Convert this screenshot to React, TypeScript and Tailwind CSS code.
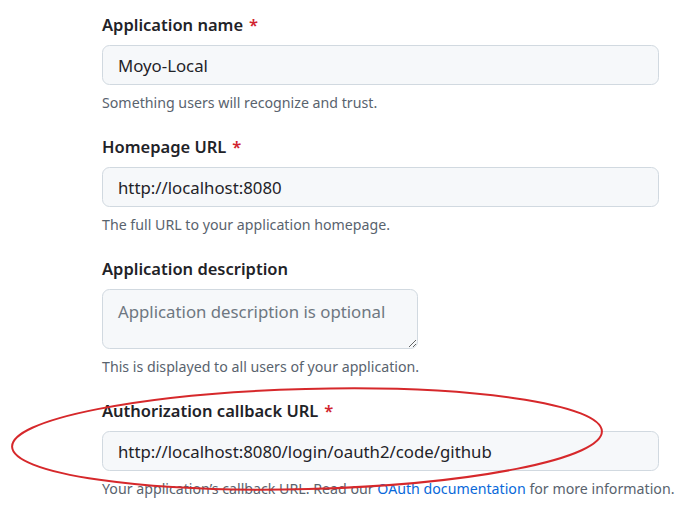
import type { ReactNode } from "react"

const font = { fontFamily: '"Segoe UI", "Noto Sans", "Liberation Sans", sans-serif' }

function Field({
  label,
  required,
  hint,
  children,
}: {
  label: string
  required?: boolean
  hint: ReactNode
  children: ReactNode
}) {
  return (
    <div className="flex flex-col">
      <label className="h-[26px] text-[16.5px] leading-[26px] font-semibold text-[#1f2328]">
        {label}
        {required && <span className="ml-[6px] text-[#d1242f]">*</span>}
      </label>
      <div className="mt-[7.5px]">{children}</div>
      <p className="mt-[7px] h-[22px] whitespace-nowrap text-[14.2px] leading-[22px] text-[#59636e]">{hint}</p>
    </div>
  )
}

function TextInput({ value }: { value: string }) {
  return (
    <input
      readOnly
      value={value}
      className="h-[40px] w-[557px] rounded-[7.5px] border border-[#d1d9e0] bg-[#f6f8fa] px-[15px] text-[16.8px] text-[#1f2328] outline-none"
      style={font}
    />
  )
}

export default function App() {
  return (
    <div className="relative h-[513px] w-[692px] overflow-hidden bg-white" style={font}>
      <div className="flex flex-col gap-[19.5px] pl-[102px] pt-[11.5px]">
        <Field label="Application name" required hint="Something users will recognize and trust.">
          <TextInput value="Moyo-Local" />
        </Field>
        <Field label="Homepage URL" required hint="The full URL to your application homepage.">
          <TextInput value="http://localhost:8080" />
        </Field>
        <Field label="Application description" hint="This is displayed to all users of your application.">
          <textarea
            readOnly
            placeholder="Application description is optional"
            className="block h-[60px] w-[316px] resize rounded-[7.5px] border border-[#d1d9e0] bg-[#f6f8fa] px-[15px] py-[10px] text-[16.8px] leading-[24px] text-[#1f2328] outline-none placeholder:text-[#6e7781]"
            style={font}
          />
        </Field>
        <Field
          label="Authorization callback URL"
          required
          hint={
            <>
              Your application’s callback URL. Read our{" "}
              <a className="text-[#0969da]" href="#">
                OAuth documentation
              </a>{" "}
              for more information.
            </>
          }
        >
          <TextInput value="http://localhost:8080/login/oauth2/code/github" />
        </Field>
      </div>

      {/* red marker drawn over the last field */}
      <svg className="pointer-events-none absolute inset-0" width="692" height="513" viewBox="0 0 692 513">
        <ellipse
          cx="307"
          cy="439"
          rx="295"
          ry="50"
          fill="none"
          stroke="#d6282b"
          strokeWidth="2"
          transform="rotate(-1.5 307 439)"
        />
      </svg>
    </div>
  )
}
